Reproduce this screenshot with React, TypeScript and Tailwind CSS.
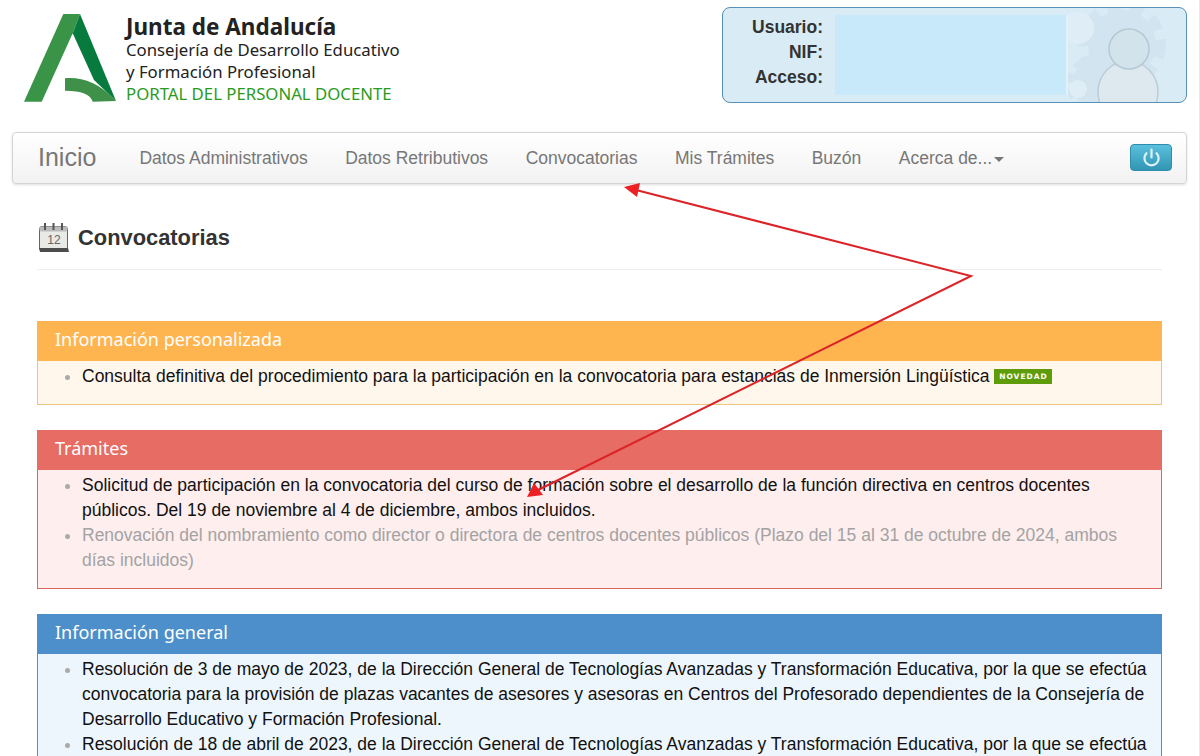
import { Power } from "lucide-react";

const arial = "font-['Liberation_Sans',Arial,sans-serif]";

function Logo() {
  return (
    <div className="flex items-start">
      <svg width="93" height="89" viewBox="0 0 93 89" className="mt-[14px] ml-[24px] shrink-0">
        <path d="M0 87.7 L39.3 0 L56 0 L48.7 19.3 L17.7 87.7 Z" fill="#3a9447" />
        <path d="M56 0 L92 87 L70 66 L48.7 19.3 Z" fill="#077a3e" />
        <path d="M41 64.3 C58 63 74 68 92 87 L68.7 87.7 C66 80 58 77 41 76.7 Z" fill="#3f9049" />
      </svg>
      <div className="ml-[9px] pt-[14px] font-['Noto_Sans',sans-serif] text-[#222]">
        <div className="text-[22.5px] leading-[25px] font-bold">Junta de Andalucía</div>
        <div className="text-[16.75px] leading-[22px]">Consejería de Desarrollo Educativo</div>
        <div className="text-[16.75px] leading-[22px]">y Formación Profesional</div>
        <div className="text-[16.75px] leading-[21px] text-[#2b9a1d]">PORTAL DEL PERSONAL DOCENTE</div>
      </div>
    </div>
  );
}

function UserBox() {
  return (
    <div className="relative mt-[7px] flex h-[96px] w-[465px] overflow-hidden rounded-[8px] border border-[#5a8fb8] bg-[#d9ebf5]">
      <svg width="120" height="96" viewBox="0 0 120 96" className="absolute top-0 right-0">
        <circle cx="56" cy="36" r="34" fill="#d1e4ef" />
        <circle cx="56" cy="36" r="39" fill="none" stroke="#d1e4ef" strokeWidth="10" strokeDasharray="14 10" />
        <circle cx="28" cy="76" r="22" fill="#d1e4ef" />
        <circle cx="28" cy="76" r="25" fill="none" stroke="#d1e4ef" strokeWidth="6" strokeDasharray="9 7" />
        <circle cx="12" cy="20" r="16" fill="#dfeef6" />
        <circle cx="12" cy="81" r="9" fill="#dfeef6" />
        <ellipse cx="62" cy="84" rx="30" ry="31" fill="#dde9ef" stroke="#bccdd6" strokeWidth="1.5" />
        <circle cx="63" cy="41" r="20" fill="#d3e3eb" stroke="#b5c9d4" strokeWidth="1.5" />
      </svg>
      <div className={`relative w-[100px] pt-[7px] text-right text-[17.5px] leading-[25px] font-bold text-[#333] ${arial}`}>
        <div>Usuario:</div>
        <div>NIF:</div>
        <div>Acceso:</div>
      </div>
      <div className="relative mt-[7px] ml-[12px] h-[80px] w-[233px] border-r-2 border-[#e3f1f8] bg-[#c7e9f9]" />
    </div>
  );
}

function NavBar() {
  const links = ["Datos Administrativos", "Datos Retributivos", "Convocatorias", "Mis Trámites", "Buzón"];
  return (
    <nav className={`mx-[12px] mt-[28px] flex h-[52px] w-[1175px] items-center rounded-[4px] border border-[#d4d4d4] bg-gradient-to-b from-white to-[#f2f2f2] pr-[14px] pl-[25px] text-[#777] shadow-sm ${arial}`}>
      <span className="mr-[43px] text-[25px]">Inicio</span>
      <div className="flex gap-[37.5px] text-[17.5px]">
        {links.map((l) => (
          <span key={l}>{l}</span>
        ))}
        <span className="flex items-center">
          Acerca de...
          <span className="mt-[2px] ml-[2px] border-x-[5px] border-t-[5px] border-x-transparent border-t-[#777]" />
        </span>
      </div>
      <button className="-mt-px ml-auto flex h-[27px] w-[42px] items-center justify-center rounded-[4px] border border-[#2f8cab] bg-gradient-to-b from-[#5bc0de] to-[#2f96b4]">
        <Power size={19} strokeWidth={2.8} className="text-[#dcf2f9]" />
      </button>
    </nav>
  );
}

function Panel({
  title,
  head,
  body,
  border,
  children,
}: {
  title: string;
  head: string;
  body: string;
  border: string;
  children: React.ReactNode;
}) {
  return (
    <section className="mb-[25px]">
      <h3 className={`flex h-[40px] items-center px-[18px] pb-[3px] font-['Noto_Sans',sans-serif] text-[18px] text-white ${head}`}>{title}</h3>
      <ul className={`list-disc border border-t-0 pt-[3px] pr-[12px] pb-[15px] pl-[44px] text-[17.5px] leading-[25px] text-[#111] marker:text-[#aaa] ${body} ${border}`}>
        {children}
      </ul>
    </section>
  );
}

export default function App() {
  return (
    <div className="relative h-[756px] w-[1200px] overflow-hidden border-r border-[#e8e8e8] bg-white">
      <header className="flex justify-between pr-[12px]">
        <Logo />
        <UserBox />
      </header>
      <NavBar />

      <main className={`mx-[37px] ${arial}`}>
        <div className="mt-[38px] mb-[51px] flex h-[48px] items-start gap-[8px] border-b border-[#eee] pb-[16px]">
          <svg width="32" height="32" viewBox="0 0 32 32" className="ml-[1px]">
            <rect x="1.5" y="4.5" width="28" height="24" rx="2.5" fill="#e9e9e6" stroke="#666" />
            <rect x="1.5" y="4.5" width="28" height="5" rx="2" fill="#bbb" />
            <path d="M1 26 L30 26 L31 30 L2 30 Z" fill="#4d4d4d" />
            <rect x="6" y="1" width="2" height="7" fill="#555" />
            <rect x="14.5" y="1" width="2" height="7" fill="#555" />
            <rect x="23" y="1" width="2" height="7" fill="#555" />
            <text x="16" y="21.5" textAnchor="middle" fontSize="12" fill="#666" fontFamily="Liberation Sans">12</text>
          </svg>
          <h2 className="text-[21.875px] leading-[32px] font-bold text-[#333]">Convocatorias</h2>
        </div>

        <Panel title="Información personalizada" head="bg-[#ffb54f]" body="bg-[#fff7ec]" border="border-[#eac67c]">
          <li>
            Consulta definitiva del procedimiento para la participación en la convocatoria para estancias de Inmersión Lingüística{" "}
            <span className="relative top-[-3px] inline-flex h-[15px] w-[58px] items-center justify-center bg-[#5e9c0a] font-['DejaVu_Sans',sans-serif] text-[7.5px] font-bold tracking-[1px] text-white">
              NOVEDAD
            </span>
          </li>
        </Panel>

        <Panel title="Trámites" head="bg-[#e66c64]" body="bg-[#feeeee]" border="border-[#d9695f]">
          <li>
            Solicitud de participación en la convocatoria del curso de formación sobre el desarrollo de la función directiva en centros docentes públicos. Del 19 de noviembre al 4 de diciembre, ambos incluidos.
          </li>
          <li className="text-[#a3a3a3]">
            Renovación del nombramiento como director o directora de centros docentes públicos (Plazo del 15 al 31 de octubre de 2024, ambos días incluidos)
          </li>
        </Panel>

        <Panel title="Información general" head="bg-[#4d8fca]" body="bg-[#edf6fd]" border="border-[#4d8fca]">
          <li>
            Resolución de 3 de mayo de 2023, de la Dirección General de Tecnologías Avanzadas y Transformación Educativa, por la que se efectúa convocatoria para la provisión de plazas vacantes de asesores y asesoras en Centros del Profesorado dependientes de la Consejería de Desarrollo Educativo y Formación Profesional.
          </li>
          <li>
            Resolución de 18 de abril de 2023, de la Dirección General de Tecnologías Avanzadas y Transformación Educativa, por la que se efectúa convocatoria
          </li>
        </Panel>
      </main>

      {/* flechas rojas sobre la captura */}
      <svg width="1200" height="756" className="pointer-events-none absolute top-0 left-0">
        <path d="M636 190 L971 276 L538 490" fill="none" stroke="#dc2428" strokeWidth="2" />
        <path d="M624 187 L640 183 L637 197 Z" fill="#ee2024" />
        <path d="M527 497 L534 483 L543 495 Z" fill="#ee2024" />
      </svg>
    </div>
  );
}
